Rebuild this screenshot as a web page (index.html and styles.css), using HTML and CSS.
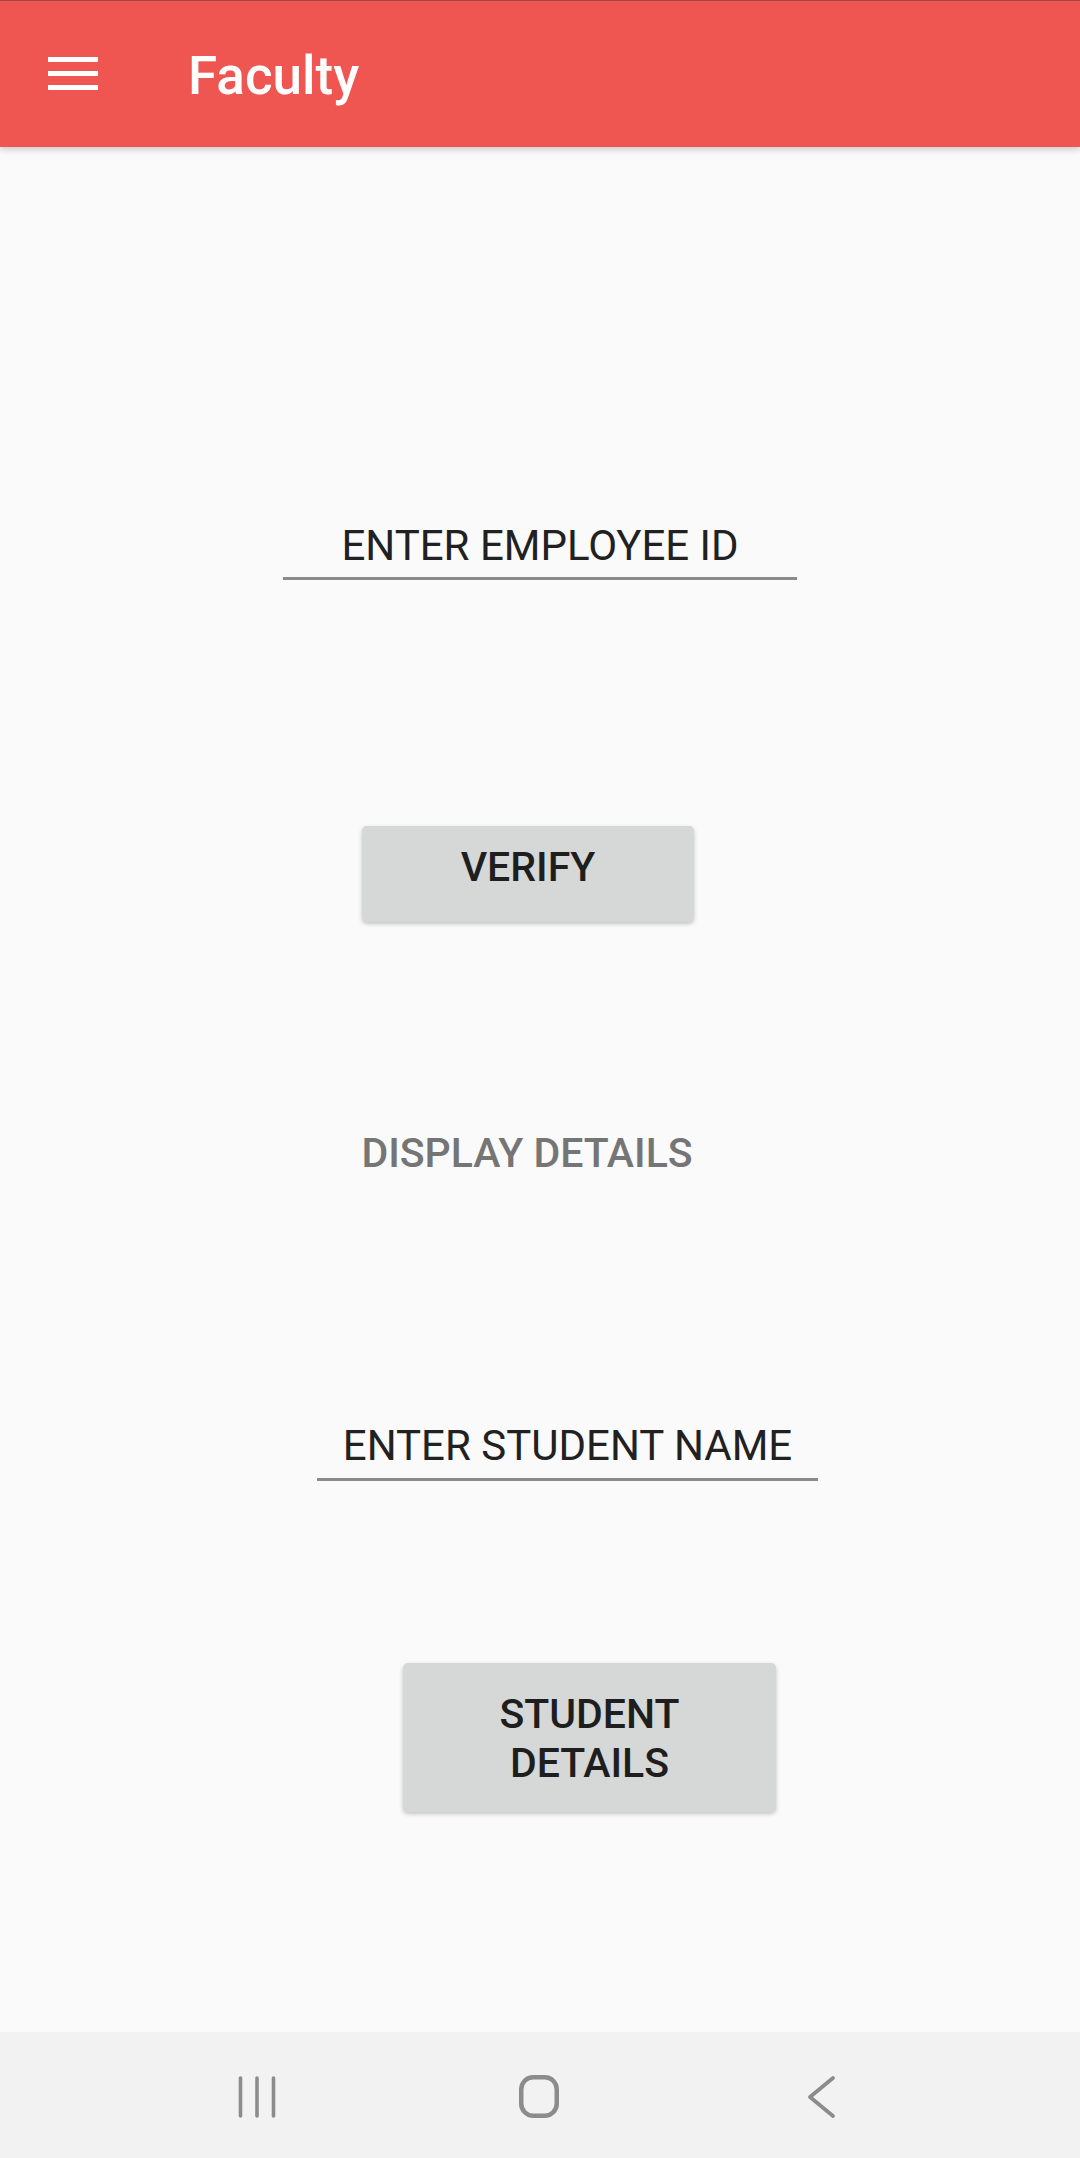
FILE: index.html
```html
<!DOCTYPE html>
<html>
<head>
<meta charset="utf-8">
<link rel="stylesheet" href="styles.css">
</head>
<body>
<div class="screen">
  <header class="appbar">
    <svg class="menu" width="50" height="33" viewBox="0 0 50 33">
      <rect x="0" y="0" width="50" height="5" fill="#fff"/>
      <rect x="0" y="14" width="50" height="5" fill="#fff"/>
      <rect x="0" y="28" width="50" height="5" fill="#fff"/>
    </svg>
    <div class="title">Faculty</div>
  </header>
  <main class="content">
    <div class="field field-emp">ENTER EMPLOYEE ID</div>
    <div class="btn btn-verify">VERIFY</div>
    <div class="display">DISPLAY DETAILS</div>
    <div class="field field-stu">ENTER STUDENT NAME</div>
    <div class="btn btn-student">STUDENT<br>DETAILS</div>
  </main>
  <footer class="navbar">
    <svg class="nav-icon" width="40" height="44" viewBox="0 0 40 44">
      <line x1="3.5" y1="3" x2="3.5" y2="41" stroke="#8c8c8c" stroke-width="3.6" stroke-linecap="round"/>
      <line x1="20" y1="3" x2="20" y2="41" stroke="#8c8c8c" stroke-width="3.6" stroke-linecap="round"/>
      <line x1="36.5" y1="3" x2="36.5" y2="41" stroke="#8c8c8c" stroke-width="3.6" stroke-linecap="round"/>
    </svg>
    <svg class="nav-icon" width="42" height="44" viewBox="0 0 42 44">
      <rect x="3.25" y="2.25" width="35.5" height="38.5" rx="12" ry="12" fill="none" stroke="#8c8c8c" stroke-width="4.5"/>
    </svg>
    <svg class="nav-icon" width="30" height="44" viewBox="0 0 30 44">
      <polyline points="26,3 3,22 26,41" fill="none" stroke="#8c8c8c" stroke-width="3.8" stroke-linecap="round" stroke-linejoin="round"/>
    </svg>
  </footer>
</div>
</body>
</html>
```
FILE: styles.css
```css
* { box-sizing: border-box; }
html, body {
  margin: 0;
  padding: 0;
  background: #fafafa;
}
body {
  font-family: Roboto, "Liberation Sans", sans-serif;
}
.screen {
  width: 1080px;
  height: 2158px;
  display: flex;
  flex-direction: column;
  overflow: hidden;
}
.appbar {
  height: 147px;
  flex: none;
  background: #ef5551;
  border-top: 1px solid #9c4a48;
  display: flex;
  align-items: flex-start;
  padding-left: 48px;
  box-shadow: 0 2px 7px rgba(0, 0, 0, 0.22);
  position: relative;
  z-index: 1;
}
.menu {
  margin-top: 56px;
  flex: none;
}
.title {
  margin-top: 44px;
  margin-left: 90px;
  color: #fff;
  font-size: 53px;
  line-height: 62px;
  font-weight: 500;
}
.content {
  flex: 1;
  display: flex;
  flex-direction: column;
  align-items: flex-start;
}
.field {
  color: #212121;
  font-size: 42px;
  line-height: 50px;
  text-align: center;
  border-bottom: 3px solid #8a8a8a;
}
.field-emp {
  margin-top: 374px;
  margin-left: 283px;
  width: 514px;
  padding-bottom: 6px;
}
.btn {
  background: #d6d7d7;
  border-radius: 5px;
  box-shadow: 0 2px 4px rgba(0, 0, 0, 0.22);
  color: #1e1e1e;
  font-weight: 500;
  font-size: 41px;
  text-align: center;
}
.btn-verify {
  margin-top: 246px;
  margin-left: 362px;
  width: 332px;
  height: 96px;
  line-height: 48px;
  padding-top: 17px;
}
.display {
  margin-top: 207px;
  margin-left: 361px;
  width: 332px;
  text-align: center;
  color: #757575;
  font-size: 41px;
  line-height: 48px;
  font-weight: 500;
}
.field-stu {
  margin-top: 244px;
  margin-left: 317px;
  width: 501px;
  padding-bottom: 7px;
}
.btn-student {
  margin-top: 182px;
  margin-left: 403px;
  width: 373px;
  height: 149px;
  line-height: 49px;
  padding-top: 27px;
}
.navbar {
  height: 126px;
  flex: none;
  background: #f2f2f2;
  display: flex;
  align-items: flex-start;
}
.nav-icon {
  flex: none;
  margin-top: 43px;
}
.nav-icon:nth-child(1) { margin-left: 237px; }
.nav-icon:nth-child(2) { margin-left: 241px; }
.nav-icon:nth-child(3) { margin-left: 247px; }
```
